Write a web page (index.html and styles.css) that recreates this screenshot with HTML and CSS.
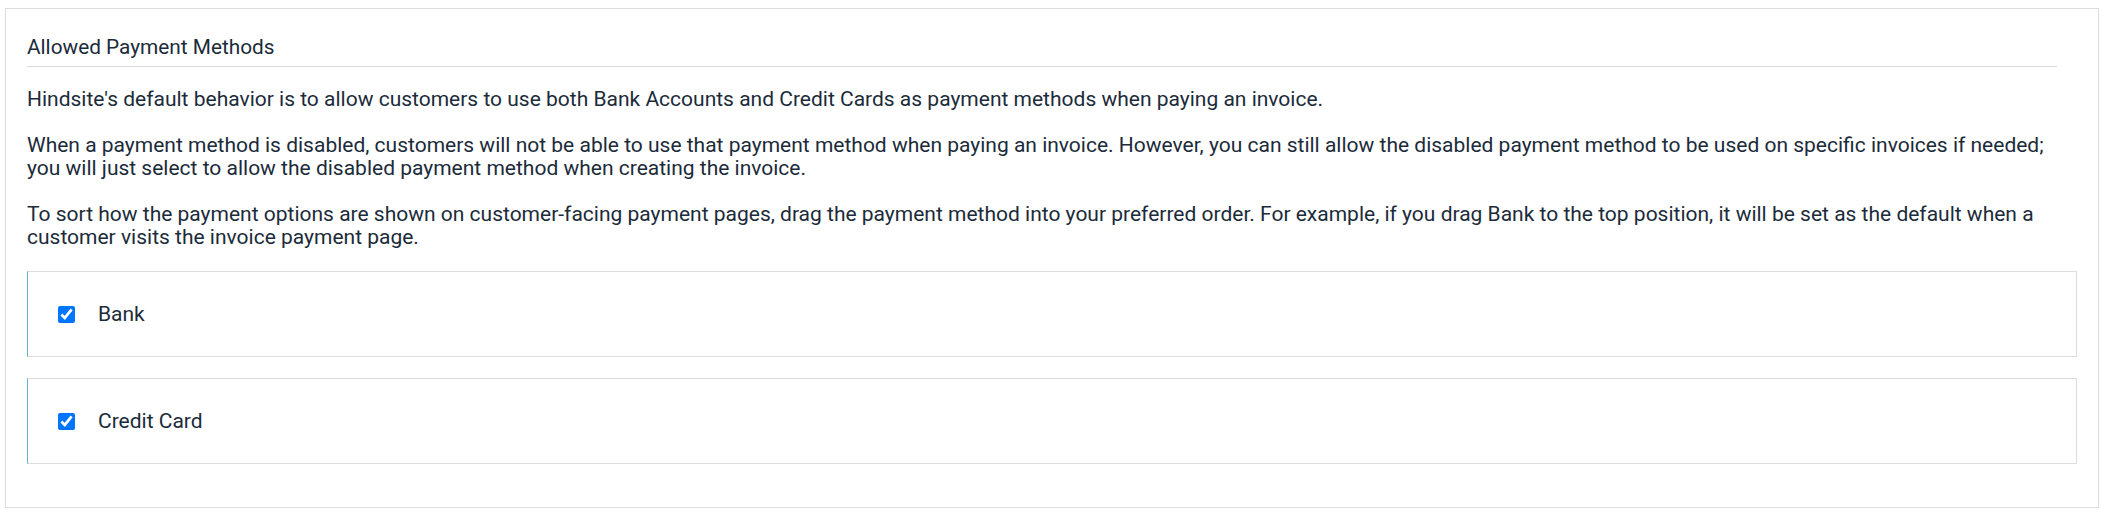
FILE: index.html
```html
<!DOCTYPE html>
<html lang="en">
<head>
<meta charset="utf-8">
<title>Allowed Payment Methods</title>
<link rel="stylesheet" href="styles.css">
</head>
<body>
<section class="panel">
  <h2 class="panel-title">Allowed Payment Methods</h2>
  <p class="panel-text">Hindsite's default behavior is to allow customers to use both Bank Accounts and Credit Cards as payment methods when paying an invoice.</p>
  <p class="panel-text">When a payment method is disabled, customers will not be able to use that payment method when paying an invoice. However, you can still allow the disabled payment method to be used on specific invoices if needed; you will just select to allow the disabled payment method when creating the invoice.</p>
  <p class="panel-text">To sort how the payment options are shown on customer-facing payment pages, drag the payment method into your preferred order. For example, if you drag Bank to the top position, it will be set as the default when a customer visits the invoice payment page.</p>
  <ul class="methods">
    <li class="method">
      <input class="method-check" type="checkbox" id="m-bank" checked>
      <label class="method-label" for="m-bank">Bank</label>
    </li>
    <li class="method">
      <input class="method-check" type="checkbox" id="m-card" checked>
      <label class="method-label" for="m-card">Credit Card</label>
    </li>
  </ul>
</section>
</body>
</html>
```
FILE: styles.css
```css
html, body {
  margin: 0;
  background: #ffffff;
}

body {
  padding: 8px 5px 4px 5px;
  font-family: Roboto, "Liberation Sans", Arial, sans-serif;
  color: #1b2b3a;
}

.panel {
  box-sizing: border-box;
  height: 500px;
  border: 1px solid #dcdcdc;
  padding: 26px 21px 0 21px;
}

.panel-title {
  margin: 0 20px 21px 0;
  padding-bottom: 6px;
  border-bottom: 1px solid #dcdcdc;
  font-size: 20.8px;
  line-height: 25px;
  font-weight: 400;
}

.panel-text {
  margin: 0 0 23px 0;
  font-size: 21px;
  line-height: 23px;
}

.panel-text:last-of-type {
  margin-bottom: 22px;
}

.methods {
  list-style: none;
  margin: 0;
  padding: 0;
  display: flex;
  flex-direction: column;
  gap: 21px;
}

.method {
  box-sizing: border-box;
  height: 86px;
  display: flex;
  align-items: center;
  padding-left: 30px;
  border: 1px solid #dcdcdc;
  border-left-color: #5fb6cf;
}

.method-check {
  width: 17px;
  height: 17px;
  margin: 0;
}

.method-label {
  margin-left: 23px;
  font-size: 21px;
  line-height: 23px;
}
```
